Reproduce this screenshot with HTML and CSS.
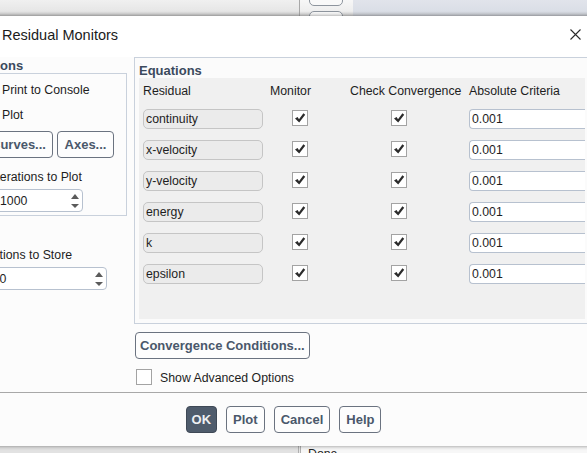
FILE: index.html
```html
<!DOCTYPE html>
<html>
<head>
<meta charset="utf-8">
<link rel="stylesheet" href="styles.css">
</head>
<body>
<div class="desk">
  <div class="topbar">
    <div class="tb-left"></div>
    <div class="tb-mid">
      <div class="tb-btn tb-btn1"></div>
      <div class="tb-btn tb-btn2"></div>
    </div>
    <div class="tb-right"></div>
  </div>

  <div class="dialog">
    <div class="titlebar">
      <span class="title">Residual Monitors</span>
      <svg class="close" width="11" height="11" viewBox="0 0 11 11"><path d="M0.5 0.5 L10.5 10.5 M10.5 0.5 L0.5 10.5" stroke="#2a2a2a" stroke-width="1.1" fill="none"/></svg>
    </div>

    <div class="content">
      <div class="leftcol">
        <div class="grp-label opt-label">Options</div>
        <div class="optbox">
          <div class="chkrow row1">
            <span class="chk"><svg width="14" height="14" viewBox="0 0 14 14"><path d="M2 7.4 L4.6 5.9 L6 8.2 L10.4 2.2 L12.2 3.7 L6.2 11.6 Z" fill="#2b2b2b"/></svg></span>
            <span class="txt">Print to Console</span>
          </div>
          <div class="chkrow row2">
            <span class="chk"><svg width="14" height="14" viewBox="0 0 14 14"><path d="M2 7.4 L4.6 5.9 L6 8.2 L10.4 2.2 L12.2 3.7 L6.2 11.6 Z" fill="#2b2b2b"/></svg></span>
            <span class="txt">Plot</span>
          </div>
          <div class="btnrow">
            <button class="btn">Curves...</button>
            <button class="btn">Axes...</button>
          </div>
          <div class="lbl lbl-plot">Iterations to Plot</div>
          <div class="spin spin1">
            <span class="spin-val">1000</span>
            <span class="arrows"><span class="up"></span><span class="down"></span></span>
          </div>
        </div>
        <div class="lbl lbl-store">Iterations to Store</div>
        <div class="spin spin2">
          <span class="spin-val">1000</span>
          <span class="arrows"><span class="up"></span><span class="down"></span></span>
        </div>
      </div>

      <div class="rightcol">
        <div class="eqbox">
          <div class="grp-label eq-label">Equations</div>
          <div class="eqarea">
            <div class="eqgrid">
              <div class="hd">Residual</div>
              <div class="hd">Monitor</div>
              <div class="hd">Check Convergence</div>
              <div class="hd">Absolute Criteria</div>

              <div class="field">continuity</div>
              <div class="cell c-mon"><span class="chk"><svg width="14" height="14" viewBox="0 0 14 14"><path d="M2 7.4 L4.6 5.9 L6 8.2 L10.4 2.2 L12.2 3.7 L6.2 11.6 Z" fill="#2b2b2b"/></svg></span></div>
              <div class="cell c-conv"><span class="chk"><svg width="14" height="14" viewBox="0 0 14 14"><path d="M2 7.4 L4.6 5.9 L6 8.2 L10.4 2.2 L12.2 3.7 L6.2 11.6 Z" fill="#2b2b2b"/></svg></span></div>
              <div class="crit">0.001</div>

              <div class="field">x-velocity</div>
              <div class="cell c-mon"><span class="chk"><svg width="14" height="14" viewBox="0 0 14 14"><path d="M2 7.4 L4.6 5.9 L6 8.2 L10.4 2.2 L12.2 3.7 L6.2 11.6 Z" fill="#2b2b2b"/></svg></span></div>
              <div class="cell c-conv"><span class="chk"><svg width="14" height="14" viewBox="0 0 14 14"><path d="M2 7.4 L4.6 5.9 L6 8.2 L10.4 2.2 L12.2 3.7 L6.2 11.6 Z" fill="#2b2b2b"/></svg></span></div>
              <div class="crit">0.001</div>

              <div class="field">y-velocity</div>
              <div class="cell c-mon"><span class="chk"><svg width="14" height="14" viewBox="0 0 14 14"><path d="M2 7.4 L4.6 5.9 L6 8.2 L10.4 2.2 L12.2 3.7 L6.2 11.6 Z" fill="#2b2b2b"/></svg></span></div>
              <div class="cell c-conv"><span class="chk"><svg width="14" height="14" viewBox="0 0 14 14"><path d="M2 7.4 L4.6 5.9 L6 8.2 L10.4 2.2 L12.2 3.7 L6.2 11.6 Z" fill="#2b2b2b"/></svg></span></div>
              <div class="crit">0.001</div>

              <div class="field">energy</div>
              <div class="cell c-mon"><span class="chk"><svg width="14" height="14" viewBox="0 0 14 14"><path d="M2 7.4 L4.6 5.9 L6 8.2 L10.4 2.2 L12.2 3.7 L6.2 11.6 Z" fill="#2b2b2b"/></svg></span></div>
              <div class="cell c-conv"><span class="chk"><svg width="14" height="14" viewBox="0 0 14 14"><path d="M2 7.4 L4.6 5.9 L6 8.2 L10.4 2.2 L12.2 3.7 L6.2 11.6 Z" fill="#2b2b2b"/></svg></span></div>
              <div class="crit">0.001</div>

              <div class="field">k</div>
              <div class="cell c-mon"><span class="chk"><svg width="14" height="14" viewBox="0 0 14 14"><path d="M2 7.4 L4.6 5.9 L6 8.2 L10.4 2.2 L12.2 3.7 L6.2 11.6 Z" fill="#2b2b2b"/></svg></span></div>
              <div class="cell c-conv"><span class="chk"><svg width="14" height="14" viewBox="0 0 14 14"><path d="M2 7.4 L4.6 5.9 L6 8.2 L10.4 2.2 L12.2 3.7 L6.2 11.6 Z" fill="#2b2b2b"/></svg></span></div>
              <div class="crit">0.001</div>

              <div class="field">epsilon</div>
              <div class="cell c-mon"><span class="chk"><svg width="14" height="14" viewBox="0 0 14 14"><path d="M2 7.4 L4.6 5.9 L6 8.2 L10.4 2.2 L12.2 3.7 L6.2 11.6 Z" fill="#2b2b2b"/></svg></span></div>
              <div class="cell c-conv"><span class="chk"><svg width="14" height="14" viewBox="0 0 14 14"><path d="M2 7.4 L4.6 5.9 L6 8.2 L10.4 2.2 L12.2 3.7 L6.2 11.6 Z" fill="#2b2b2b"/></svg></span></div>
              <div class="crit">0.001</div>
            </div>
          </div>
        </div>
        <button class="btn conv-btn">Convergence Conditions...</button>
        <div class="chkrow adv">
          <span class="chk"></span>
          <span class="txt">Show Advanced Options</span>
        </div>
      </div>
    </div>

    <div class="footer">
      <button class="btn primary">OK</button>
      <button class="btn">Plot</button>
      <button class="btn">Cancel</button>
      <button class="btn">Help</button>
    </div>
  </div>

  <div class="bottombar">
    <div class="bb-left"></div>
    <div class="bb-mid"><span class="done">Done</span></div>
  </div>
</div>
</body>
</html>
```

FILE: styles.css
```css
html, body {
  margin: 0;
  padding: 0;
}
body {
  width: 587px;
  height: 453px;
  overflow: hidden;
  background: #e6e6e6;
  font-family: "Liberation Sans", Arial, sans-serif;
  font-size: 12.3px;
  color: #1e1e1e;
}
.desk {
  display: flex;
  flex-direction: column;
  width: 587px;
  height: 453px;
  overflow: hidden;
}

/* background application strips */
.topbar {
  height: 16px;
  flex: none;
  display: flex;
}
.tb-left {
  width: 299px;
  background: linear-gradient(#f0f0f0, #e6e6e6 70%, #c9c9c9);
  border-right: 1px solid #a8a8a8;
}
.tb-mid {
  width: 53px;
  background: linear-gradient(#f7f7f7, #eeeeee 70%, #cfcfcf);
  display: flex;
  flex-direction: column;
  padding-left: 9px;
  box-sizing: border-box;
  overflow: hidden;
}
.tb-btn {
  width: 34px;
  flex: none;
  box-sizing: border-box;
  border: 1px solid #8e959e;
  border-radius: 5px;
  background: #f9f9f9;
}
.tb-btn1 {
  height: 16px;
  margin-top: -10px;
}
.tb-btn2 {
  height: 20px;
  margin-top: 5px;
}
.tb-right {
  flex: 1;
  background: linear-gradient(#e1e4eb, #dadee6 70%, #c5c8ce);
}

.bottombar {
  flex: 1;
  display: flex;
}
.bb-left {
  width: 298px;
  background: #e2e2e2;
  border-right: 1px solid #b0b0b0;
}
.bb-mid {
  flex: 1;
  background: #f7f7f7;
  border-left: 1px solid #b0b0b0;
  margin-left: 1px;
  padding-left: 7px;
  overflow: hidden;
}
.done {
  display: block;
  line-height: 14px;
  margin-top: 1px;
  color: #222;
}

/* dialog */
.dialog {
  flex: none;
  height: 430px;
  width: 633px;
  margin-left: -33px;
  background: #fcfcfc;
  box-shadow: 0 0 4px rgba(0, 0, 0, 0.45);
  display: flex;
  flex-direction: column;
  position: relative;
  z-index: 1;
}
.titlebar {
  height: 41px;
  flex: none;
  background: #ffffff;
  display: flex;
  align-items: center;
  justify-content: space-between;
  padding: 0 19px 0 35px;
}
.title {
  font-size: 14.5px;
  color: #1b1b1b;
  margin-top: -3px;
}
.close {
  margin-top: -4px;
}

.content {
  height: 335px;
  flex: none;
  display: flex;
  padding-left: 2px;
  gap: 7px;
}

.grp-label {
  font-weight: bold;
  font-size: 13px;
  color: #3b4a5d;
  height: 16px;
  line-height: 17px;
}

/* left column */
.leftcol {
  width: 158px;
  flex: none;
  display: flex;
  flex-direction: column;
  align-items: flex-start;
}
.opt-label {
  margin-left: 5px;
}
.optbox {
  width: 158px;
  height: 143px;
  box-sizing: border-box;
  border: 1px solid #c9d1dc;
  display: flex;
  flex-direction: column;
  align-items: flex-start;
}
.chkrow {
  display: flex;
  align-items: center;
  height: 20px;
  gap: 8px;
}
.chkrow .txt {
  padding-top: 1px;
}
.optbox .chkrow {
  margin-left: 8px;
}
.row1 { margin-top: 5px; }
.row2 { margin-top: 5px; }

.chk {
  width: 16px;
  height: 16px;
  box-sizing: border-box;
  border: 1px solid #a3a3a3;
  background: #ffffff;
  display: flex;
  align-items: center;
  justify-content: center;
  flex: none;
}
.chk svg {
  display: block;
}

.btn {
  font-family: "Liberation Sans", Arial, sans-serif;
  font-weight: bold;
  font-size: 13px;
  color: #4a586b;
  background: #fdfdfd;
  border: 1px solid #6b7380;
  border-radius: 4px;
  height: 27px;
  padding: 0 6px;
  margin: 0;
  box-sizing: border-box;
  line-height: 25px;
}
.btnrow {
  display: flex;
  gap: 4px;
  margin-top: 7px;
  margin-left: 14px;
}
.btnrow .btn:first-child {
  width: 69px;
}
.btnrow .btn:last-child {
  width: 57px;
}

.lbl {
  height: 16px;
  line-height: 17px;
}
.lbl-plot {
  margin-top: 11px;
  margin-left: 23px;
}
.lbl-store {
  margin-top: 31px;
  margin-left: 6px;
}

.spin {
  background: #ffffff;
  border: 1px solid #b7c1cf;
  border-radius: 4px;
  box-sizing: border-box;
  display: flex;
  align-items: center;
  justify-content: space-between;
}
.spin1 {
  margin-top: 4px;
  margin-left: 26px;
  width: 87px;
  height: 23px;
  padding-left: 3px;
}
.spin2 {
  margin-top: 4px;
  margin-left: 4px;
  width: 134px;
  height: 23px;
  padding-left: 5px;
}
.spin-val {
  color: #1e1e1e;
  padding-top: 1px;
}
.arrows {
  width: 14px;
  display: flex;
  flex-direction: column;
  align-items: center;
  gap: 5px;
}
.up {
  width: 0;
  height: 0;
  border-left: 4px solid transparent;
  border-right: 4px solid transparent;
  border-bottom: 5px solid #5b5b5b;
}
.down {
  width: 0;
  height: 0;
  border-left: 4px solid transparent;
  border-right: 4px solid transparent;
  border-top: 4px solid #5b5b5b;
}

/* right column */
.rightcol {
  flex: 1;
  min-width: 0;
  display: flex;
  flex-direction: column;
  align-items: flex-start;
  padding-right: 10px;
}
.eqbox {
  align-self: stretch;
  height: 267px;
  box-sizing: border-box;
  border: 1px solid #c9d1dc;
  background: #fbfbfb;
  padding: 4px 4px 4px 4px;
  display: flex;
  flex-direction: column;
}
.eqarea {
  height: 241px;
  background: #f0f0f0;
  padding: 4px 0 0 4px;
  box-sizing: border-box;
}
.eqgrid {
  display: grid;
  grid-template-columns: 127px 80px 119px 1fr;
  grid-template-rows: 16px repeat(6, 20px);
  row-gap: 11px;
  align-items: center;
}
.hd {
  height: 16px;
  line-height: 18px;
  color: #1e1e1e;
}
.field {
  width: 120px;
  height: 20px;
  box-sizing: border-box;
  border: 1px solid #c5c5c5;
  border-radius: 5px;
  background: #ebebeb;
  padding-left: 2px;
  line-height: 19px;
}
.cell {
  display: flex;
  align-items: center;
  height: 20px;
}
.c-mon {
  padding-left: 22px;
  margin-top: -3px;
}
.c-conv {
  padding-left: 41px;
  margin-top: -3px;
}
.crit {
  height: 20px;
  box-sizing: border-box;
  border: 1px solid #b7c1cf;
  border-right: none;
  border-radius: 4px 0 0 4px;
  background: #ffffff;
  padding-left: 2px;
  line-height: 19px;
}

.conv-btn {
  margin-top: 8px;
  margin-left: 1px;
  padding: 0 4px;
  height: 27px;
}
.adv {
  margin-top: 9px;
  margin-left: 2px;
  height: 18px;
}

/* footer */
.footer {
  flex: 1;
  border-top: 1px solid #a8a8a8;
  display: flex;
  justify-content: center;
  align-items: flex-start;
  padding-top: 13px;
  gap: 9px;
}
.footer .btn {
  height: 27px;
}
.footer .primary {
  background: #4f5c6c;
  border-color: #3f4956;
  color: #eef0f3;
  padding: 0 5px;
}
```
